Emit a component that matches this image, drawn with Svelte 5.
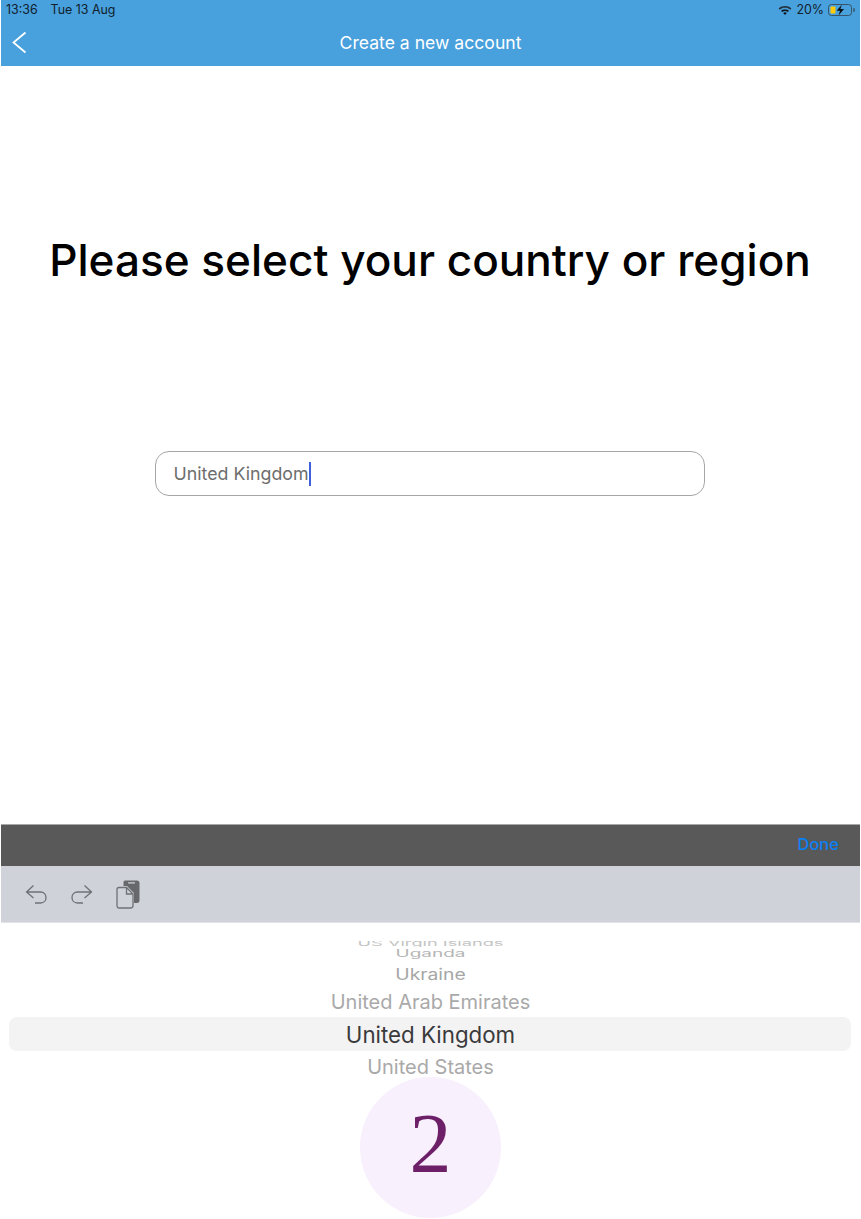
<script>
  const wheel = [
    { name: "US Virgin Islands", cls: "far3" },
    { name: "Uganda", cls: "far2" },
    { name: "Ukraine", cls: "far1" },
    { name: "United Arab Emirates", cls: "near" },
    { name: "United Kingdom", cls: "current" },
    { name: "United States", cls: "near after" }
  ];
</script>

<div class="screen">
  <header class="top">
    <div class="status">
      <span>13:36</span>
      <span class="date">Tue 13 Aug</span>
      <span class="spacer"></span>
      <svg class="wifi" width="14" height="10" viewBox="0 0 14 10">
        <path d="M0.6 3.4C4.2 0.2 9.8 0.2 13.4 3.4L12.2 4.7C9.2 2.2 4.8 2.2 1.8 4.7Z" fill="#24323c" />
        <path d="M3 5.8C5.3 3.9 8.7 3.9 11 5.8L9.8 7C8.2 5.7 5.8 5.7 4.2 7Z" fill="#0c1418" />
        <path d="M5.2 8C6.3 7.1 7.7 7.1 8.8 8L7 9.9Z" fill="#0c1418" />
      </svg>
      <span class="pct">20%</span>
      <svg class="battery" width="27" height="12" viewBox="0 0 27 12">
        <rect x="0.5" y="0.5" width="23" height="11" rx="3" fill="none" stroke="#33404a" stroke-width="0.8" />
        <rect x="2.5" y="2.5" width="5" height="7" rx="1" fill="#fecb0a" />
        <path d="M26 4.2V7.8" stroke="#33404a" stroke-width="1.2" />
        <path d="M13.8 0.8L8.6 6.8H12L10.6 11.4L16 5H12.4Z" fill="#0a0f14" />
      </svg>
    </div>
    <div class="nav">
      <svg class="back" width="16" height="24" viewBox="0 0 16 24">
        <path d="M14.5 2.5L2.5 12.5L14.5 22.5" fill="none" stroke="#fff" stroke-width="1.8" />
      </svg>
      <span>Create a new account</span>
    </div>
  </header>

  <main class="content">
    <h1>Please select your country or region</h1>
    <div class="field">
      <span>United Kingdom</span><i class="caret"></i>
    </div>
  </main>

  <div class="keyboard">
    <div class="donebar"><span>Done</span></div>
    <div class="tools">
      <svg width="24" height="24" viewBox="0 0 24 24">
        <path d="M9.5 3.5L2.5 10L9.5 16M2.5 10H16.5C20 10 22 12.5 22 15.5C22 18.5 20 21 16.5 21H11" fill="none" stroke="#6f7175" stroke-width="1.3" />
      </svg>
      <svg width="24" height="24" viewBox="0 0 24 24">
        <path d="M14.5 3.5L21.5 10L14.5 16M21.5 10H7.5C4 10 2 12.5 2 15.5C2 18.5 4 21 7.5 21H13" fill="none" stroke="#6f7175" stroke-width="1.3" />
      </svg>
      <svg width="24" height="29" viewBox="0 0 24 29">
        <path d="M7.5 2C7.5 1 8.5 0.5 9.5 0.5H21C22.5 0.5 23.5 1.5 23.5 3V20.5C23.5 22 22.5 23 21 23H18V13L11 6H7.5Z" fill="#66686c" />
        <rect x="12" y="2.3" width="7" height="1.1" rx="0.5" fill="#d0d3da" />
        <path d="M3 7.5H10.5L17 14V25.5C17 27 16 28 14.5 28H3C1.8 28 1 27 1 25.5V9.5C1 8.3 1.8 7.5 3 7.5Z M10.5 7.5V14H17" fill="none" stroke="#6f7175" stroke-width="1.3" />
      </svg>
    </div>
    <div class="picker">
      <div class="selection"></div>
      <div class="rows">
        {#each wheel as row}
          <div class={"row " + row.cls}><span>{row.name}</span></div>
        {/each}
      </div>
      <div class="step">2</div>
    </div>
  </div>
</div>

<style>
  :global(body) {
    margin: 0;
    background: #fff;
  }

  .screen {
    width: 861px;
    height: 1219px;
    box-sizing: border-box;
    padding: 0 1px;
    display: flex;
    flex-direction: column;
    font-family: Inter, "Liberation Sans", sans-serif;
    overflow: hidden;
    background: #fff;
  }

  .top {
    height: 66px;
    flex: none;
    background: #48a0dc;
  }

  .status {
    height: 20px;
    display: flex;
    align-items: center;
    padding: 0 5px 1px 5px;
    box-sizing: border-box;
    font-size: 12.4px;
    color: #10202c;
  }

  .date {
    margin-left: 13px;
  }

  .spacer {
    flex: 1;
  }

  .pct {
    margin: 0 4px 0 4px;
  }

  .nav {
    height: 46px;
    position: relative;
    display: flex;
    align-items: center;
    justify-content: center;
    color: #fff;
    font-size: 17.6px;
    padding-bottom: 1px;
    box-sizing: border-box;
  }

  .back {
    position: absolute;
    left: 10px;
    top: 10px;
  }

  .content {
    flex: 1;
    display: flex;
    flex-direction: column;
    align-items: center;
  }

  h1 {
    margin: 165px 1px 0 0;
    font-size: 44.1px;
    line-height: 58px;
    font-weight: 500;
    color: #000;
    white-space: nowrap;
  }

  .field {
    width: 550px;
    height: 45px;
    margin: 162px 2px 0 0;
    box-sizing: border-box;
    border: 1px solid #a6a6a6;
    border-radius: 14px;
    padding: 0 18px;
    display: flex;
    align-items: center;
    font-size: 17.8px;
    color: #6d6d6d;
  }

  .caret {
    width: 2px;
    height: 24px;
    background: #3f5fdc;
  }

  .keyboard {
    height: 395px;
    flex: none;
    display: flex;
    flex-direction: column;
  }

  .donebar {
    height: 42px;
    box-sizing: border-box;
    border-top: 1px solid #a8a8a8;
    padding: 0 21px 4px 0;
    background: #595959;
    display: flex;
    align-items: center;
    justify-content: flex-end;
    color: #0a80f5;
    font-size: 16.5px;
    font-weight: 500;
  }

  .tools {
    height: 57px;
    box-sizing: border-box;
    background: #cfd2d9;
    border-bottom: 1px solid #e2e3e8;
    display: flex;
    align-items: center;
    gap: 22px;
    padding: 0 0 0 23px;
  }

  .picker {
    flex: 1;
    position: relative;
    overflow: hidden;
    background: #fff;
  }

  .selection {
    position: absolute;
    left: 8px;
    right: 9px;
    top: 94px;
    height: 34px;
    border-radius: 8px;
    background: #f3f3f3;
  }

  .rows {
    position: relative;
    display: flex;
    flex-direction: column;
    align-items: center;
    padding-top: 18px;
  }

  .row {
    white-space: nowrap;
    color: #a9a9a9;
  }

  .row span {
    display: inline-block;
  }

  .far3 {
    height: 6px;
    overflow: hidden;
    font-size: 18.2px;
    line-height: 6px;
    color: #c4c4c4;
  }

  .far3 span {
    transform: translateY(-1px) scaleY(0.45);
  }

  .far2 {
    height: 14px;
    font-size: 19px;
    line-height: 14px;
    color: #b5b5b5;
  }

  .far2 span {
    transform: scaleY(0.55);
  }

  .far1 {
    height: 26px;
    line-height: 26px;
    font-size: 19.3px;
    color: #a6a6a6;
  }

  .far1 span {
    transform: scaleY(0.8);
  }

  .near {
    height: 31px;
    line-height: 31px;
    font-size: 20px;
  }

  .current {
    height: 34px;
    line-height: 34px;
    font-size: 22.3px;
    color: #3a3a3c;
  }

  .after {
    height: 31px;
    line-height: 31px;
  }

  /* step badge sits over the wheel */
  .step {
    position: absolute;
    left: 359px;
    top: 154px;
    width: 141px;
    height: 141px;
    border-radius: 50%;
    background: #f8f0fd;
    color: #6d1f68;
    font-family: "Liberation Serif", serif;
    font-size: 84px;
    line-height: 133px;
    text-align: center;
  }
</style>
